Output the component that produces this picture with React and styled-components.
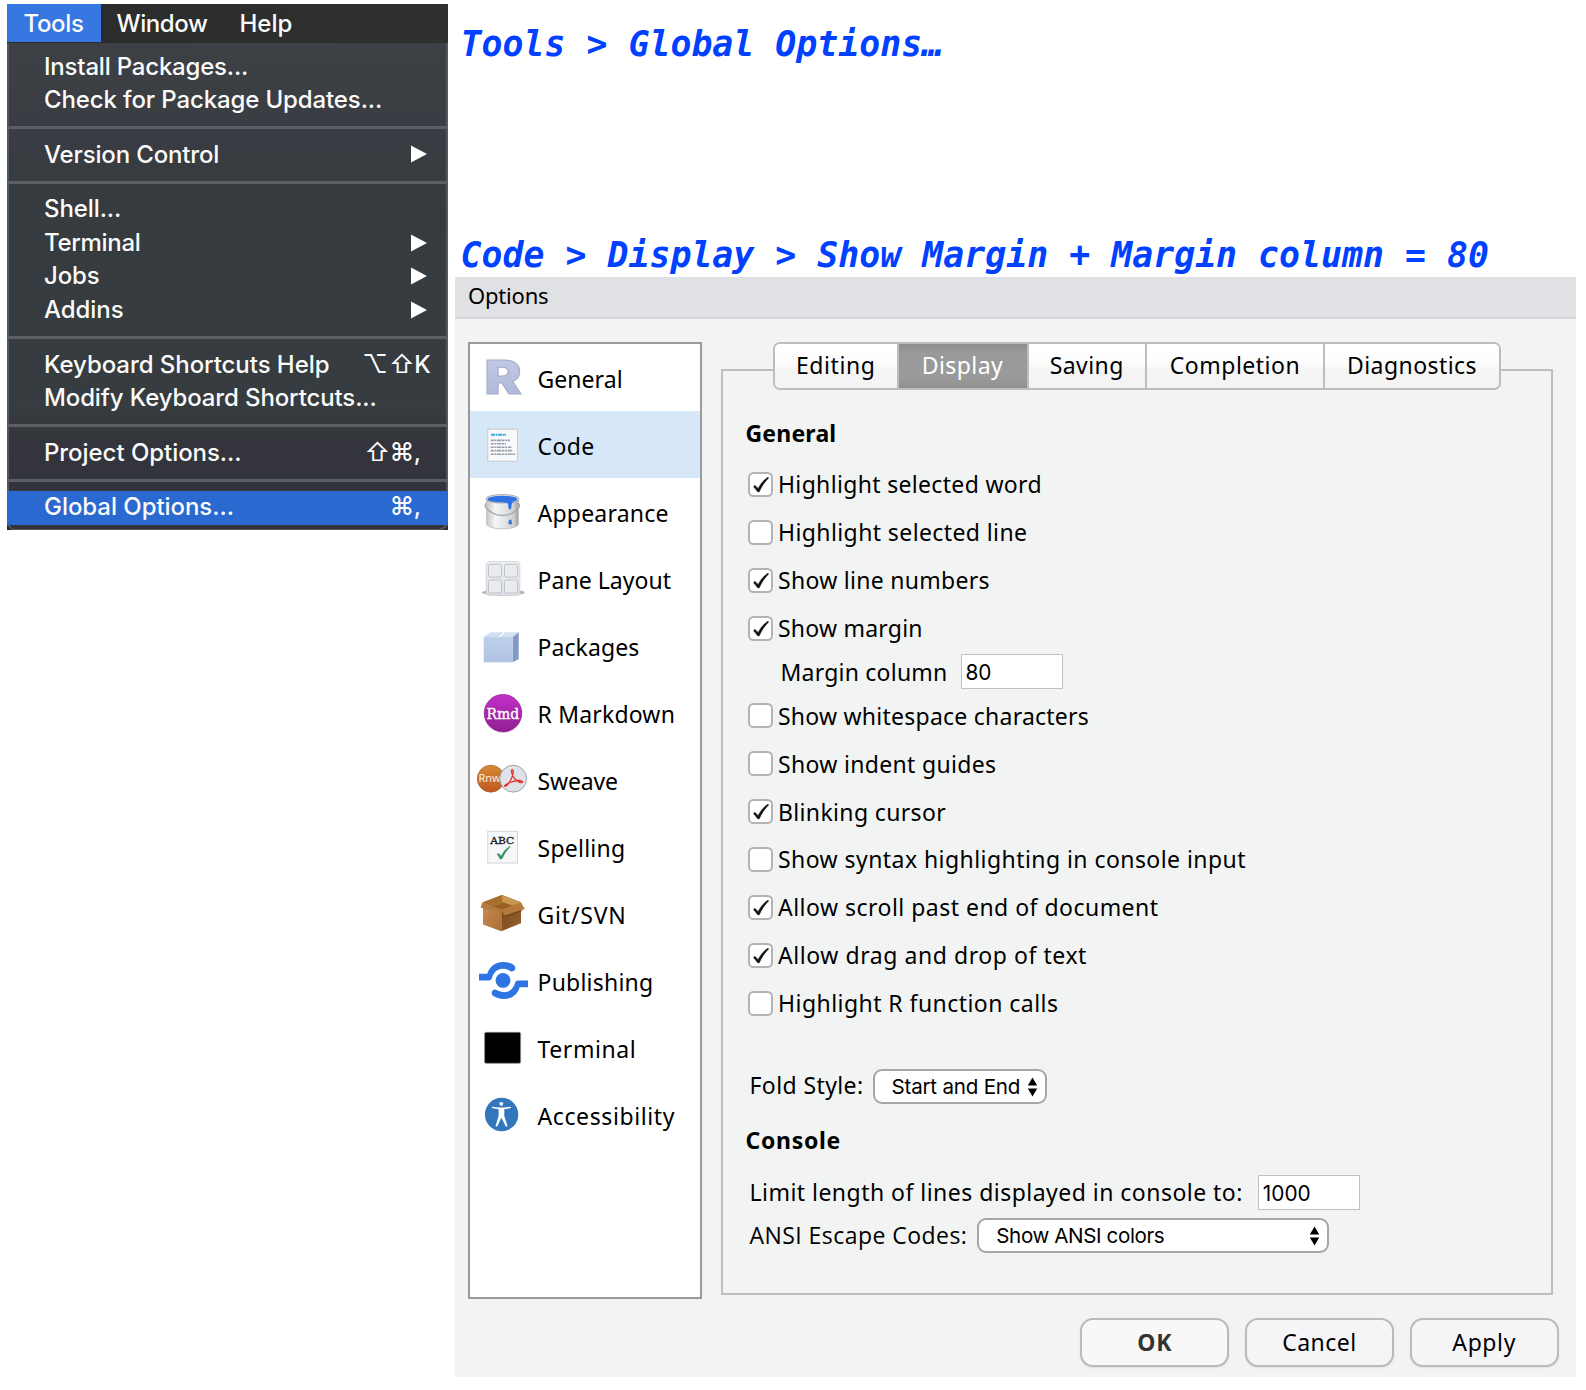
import React from "react";
import styled, { createGlobalStyle, css } from "styled-components";

const menuFont = `Inter, "DejaVu Sans", sans-serif`;
const dialogFont = `"Noto Sans", "Open Sans", sans-serif`;

const GlobalStyle = createGlobalStyle`
  *, *::before, *::after { box-sizing: border-box; }
  body { margin: 0; background: #fff; color: #000; }
`;

const Page = styled.main`
  width: 1586px;
  height: 1390px;
  display: grid;
  grid-template-columns: 441px 1121px;
  column-gap: 7px;
  padding: 4px 10px 0 7px;
  overflow: hidden;
  align-items: start;
`;

const Text = styled.span`
  white-space: pre;
  letter-spacing: ${(p) => p.$track || 0}px;
`;

/* ---------- Menu ---------- */

const MenuShot = styled.section`
  height: 526px;
  display: flex;
  flex-direction: column;
  background: #2b2b30;
  font: 500 24px/33.6px ${menuFont};
  color: #fbfbfb;
`;

const MenuBar = styled.nav`
  height: 39px;
  display: flex;
  flex: none;
  background: linear-gradient(90deg, #2a2b2b, #2f302f);
`;

const BarItem = styled.div`
  height: ${(p) => (p.$active ? 38 : 39)}px;
  line-height: 39px;
  padding: 0 0 0 ${(p) => p.$left}px;
  width: ${(p) => p.$width}px;
  background: ${(p) => (p.$active ? "#3777e1" : "transparent")};
`;

const MenuList = styled.div`
  flex: 1;
  padding-top: 7px;
  border-radius: 0 0 8px 8px;
  background: linear-gradient(180deg, #3d4044 0%, #393d43 20%, #353b3e 35%, #363c3f 75%, #34353c 82%, #33343b 100%);
  box-shadow: inset 2px 0 0 #54585c, inset -2px -1px 0 #54585c;
`;

const MenuRow = styled.div`
  height: 33.6px;
  display: flex;
  align-items: center;
  padding: 0 21.5px 0 37px;
  background: ${(p) => (p.$active ? "#2a69d0" : "transparent")};

  > span { padding-bottom: 1px; }
`;

const Separator = styled.div`
  height: 3px;
  margin: 9px 0;
  background: #5b5f64;
`;

const MenuEnd = styled.span`
  margin-left: auto;
  display: flex;
  align-items: center;
  margin-right: ${(p) => p.$pull || 0}px;
`;

const Key = styled.span`
  width: ${(p) => p.$w}px;
  text-align: center;
  font-weight: ${(p) => (p.$bold ? 500 : 400)};
  font-size: ${(p) => (p.$symbol ? 25 : 24)}px;
`;

const Arrow = () => (
  <svg width="16" height="18" viewBox="0 0 16 18">
    <path d="M0 .5 16 9 0 17.5Z" fill="#fff" />
  </svg>
);

const keyWidth = { "⌥": 28, "⇧": 25, "⌘": 24, K: 17, ",": 8 };

const menuItems = [
  { label: "Install Packages...", track: -0.2 },
  { label: "Check for Package Updates...", track: -0.12 },
  null,
  { label: "Version Control", track: -0.15, sub: true },
  null,
  { label: "Shell...", track: -0.1 },
  { label: "Terminal", track: -0.3, sub: true },
  { label: "Jobs", track: -0.1, sub: true },
  { label: "Addins", track: -0.05, sub: true },
  null,
  { label: "Keyboard Shortcuts Help", track: -0.06, keys: "⌥⇧K", pull: -4.5 },
  { label: "Modify Keyboard Shortcuts...", track: -0.12 },
  null,
  { label: "Project Options...", track: -0.05, keys: "⇧⌘,", pull: 5 },
  null,
  { label: "Global Options...", track: -0.05, keys: "⌘,", pull: 5, active: true },
];

const ToolsMenu = () => (
  <MenuShot>
    <MenuBar>
      <BarItem $active $left={16.5} $width={94}>
        <Text $track={-0.35}>Tools</Text>
      </BarItem>
      <BarItem $left={15.5} $width={123}>
        <Text $track={-0.4}>Window</Text>
      </BarItem>
      <BarItem $left={15.5} $width={100}>
        <Text>Help</Text>
      </BarItem>
    </MenuBar>
    <MenuList>
      {menuItems.map((item, i) =>
        item ? (
          <MenuRow key={i} $active={item.active}>
            <Text $track={item.track}>{item.label}</Text>
            {item.sub && (
              <MenuEnd>
                <Arrow />
              </MenuEnd>
            )}
            {item.keys && (
              <MenuEnd $pull={item.pull}>
                {[...item.keys].map((k) => (
                  <Key key={k} $w={keyWidth[k]} $symbol={k > "z"} $bold={k < "z" || k === "⌘"}>
                    {k}
                  </Key>
                ))}
              </MenuEnd>
            )}
          </MenuRow>
        ) : (
          <Separator key={i} />
        )
      )}
    </MenuList>
  </MenuShot>
);

/* ---------- Right column ---------- */

const Guide = styled.section`
  display: flex;
  flex-direction: column;
`;

const Step = styled.h2`
  margin: ${(p) => p.$top}px 0 0 5.5px;
  height: 43px;
  font: italic 700 34.8px/43px "DejaVu Sans Mono", monospace;
  letter-spacing: 0.04px;
  color: #0040ff;
  white-space: pre;
`;

const Dialog = styled.section`
  height: 1100px;
  display: flex;
  flex-direction: column;
  background: #f2f4f3;
  font: 400 23px/30px ${dialogFont};
`;

const TitleBar = styled.header`
  height: 42px;
  flex: none;
  padding-left: 13px;
  background: #e0e1e5;
  border-bottom: 2px solid #d6d7db;
  font-size: 22px;
  line-height: 37px;
`;

const DialogBody = styled.div`
  display: flex;
  gap: 19px;
  padding: 23px 23px 0 13px;
`;

const Sidebar = styled.nav`
  width: 234px;
  height: 957px;
  flex: none;
  border: 2px solid #999b9b;
  background: #fff;
`;

const SideItem = styled.div`
  height: 67px;
  display: flex;
  align-items: center;
  background: ${(p) => (p.$active ? "#d6e8f7" : "transparent")};

  svg { flex: none; }
  span { margin-left: -0.5px; padding-top: 2.5px; }
`;

const Frame = styled.div`
  width: 832px;
  height: 926px;
  margin-top: 27px;
  border: 2px solid #bcbebd;
  display: flex;
  flex-direction: column;
`;

const TabBar = styled.div`
  width: 728px;
  height: 48px;
  flex: none;
  margin: -29px auto 0 50px;
  display: flex;
  border: 2px solid #bcbebd;
  border-radius: 7px;
  overflow: hidden;
`;

const Tab = styled.div`
  width: ${(p) => p.$width}px;
  flex: none;
  display: flex;
  justify-content: center;
  line-height: 43px;
  background: linear-gradient(180deg, #fff 0%, #fdfdfd 40%, #f5f5f6 60%, #f3f3f4 100%);
  border-right: ${(p) => (p.$last ? 0 : 2)}px solid #bcbebd;
  ${(p) =>
    p.$active &&
    css`
      color: #fff;
      background: linear-gradient(180deg, #8d8d8d 0%, #9a9a9a 22%, #9a9a9a 80%, #8f8f8f 100%);
    `}
`;

const Settings = styled.div`
  padding: 28px 0 0 22.5px;
  display: flex;
  flex-direction: column;
`;

const Heading = styled.h3`
  margin: ${(p) => p.$top || 0}px 0 0;
  font: 700 23px/30px ${dialogFont};
`;

const Options = styled.div`
  padding: 12.5px 0 0 2.5px;
`;

const Option = styled.div`
  height: 47.87px;
  display: flex;
  align-items: center;
  gap: 5px;
`;

const Box = styled.span`
  width: 25px;
  height: 25px;
  border: 2px solid #b3b3b3;
  border-radius: 5.5px;
  background: #fff;
  display: grid;
  place-items: center;
  flex: none;
`;

const Check = () => (
  <svg width="19" height="19" viewBox="0 0 19 19">
    <path d="M2.6 11.6 4 10.4 7.2 13.7C9.7 8.8 12.4 5.3 17 2.3L17.6 2.9C13.6 6.8 10.6 11 8.2 16.8L7 16.9Z" fill="#111" stroke="#111" strokeWidth=".7" />
  </svg>
);

const Row = styled.div`
  height: ${(p) => p.$height}px;
  margin-top: ${(p) => p.$top || 0}px;
  padding-left: ${(p) => p.$indent}px;
  display: flex;
  align-items: center;

  > span { line-height: 30px; padding-bottom: ${(p) => p.$lift || 0}px; }
`;

const Field = styled.input`
  width: 102px;
  height: 35px;
  margin: 0 0 0 ${(p) => p.$left}px;
  padding: 2px 0 0 4px;
  border: 1.5px solid #c0c0c0;
  border-radius: 0;
  background: #fff;
  font: 400 20.8px/30px ${menuFont};
  color: #000;
  outline: none;
`;

const Select = styled.div`
  width: ${(p) => p.$width}px;
  height: 35px;
  margin-left: ${(p) => p.$left}px;
  padding: 1px 7px 0 17px;
  border: 2px solid #a6a6a6;
  border-radius: 9px;
  background: #fff;
  display: flex;
  align-items: center;
  justify-content: space-between;
  font: 400 20.6px/32px ${menuFont};
`;

const OpenSansText = styled(Text)`
  font-family: "Open Sans", sans-serif;
`;

const UpDown = () => (
  <svg width="11" height="20" viewBox="0 0 11 20">
    <path d="M5.5.6 10.2 8.6H.8Z M5.5 19.4 10.2 11.4H.8Z" fill="#000" />
  </svg>
);

const Actions = styled.footer`
  display: flex;
  justify-content: flex-end;
  gap: 16px;
  padding: 18.5px 17.5px 0 0;
`;

const Button = styled.button`
  width: 148.7px;
  height: 49.5px;
  padding: 0 0 1px;
  border: 2px solid #b9babb;
  border-radius: 13px;
  background: ${(p) => (p.$primary ? "#f8f8f8" : "#f5f5f8")};
  box-shadow: 0 1px 2px rgba(0, 0, 0, 0.08);
  font: ${(p) => (p.$primary ? 700 : 400)} 23px/30px ${dialogFont};
  color: ${(p) => (p.$primary ? "#333" : "#000")};
`;

/* ---------- Sidebar icons ---------- */

const Icon = ({ children }) => (
  <svg width="68" height="67" viewBox="0 0 68 67" fill="none">
    {children}
  </svg>
);

const RIcon = () => (
  <Icon>
    <linearGradient id="r" x1="0" y1="0" x2="0" y2="1">
      <stop offset="0" stopColor="#c6cde6" />
      <stop offset="1" stopColor="#a9b5d9" />
    </linearGradient>
    <text x="14.4" y="50.4" fontFamily="Inter" fontWeight="900" fontSize="46.5" textLength="37.2" lengthAdjust="spacingAndGlyphs" fill="url(#r)" stroke="#a8adc8" strokeWidth="1">R</text>
  </Icon>
);

const CodeIcon = () => (
  <Icon>
    <rect x="17.8" y="18.2" width="29.6" height="32" fill="#f8f9fc" stroke="#c6c8cd" />
    <g strokeWidth="2">
      <path d="M21 23.7H36" stroke="#38aad8" strokeDasharray="4 .6 2 .5" />
      <g stroke="#9b9ea8" strokeDasharray="3 .7 2 .6 4 .5" strokeWidth="1.6">
        <path d="M20.7 29.4H40M20.7 32.8H36M20.7 36.2H41.5M20.7 39.6H42.5M20.7 43.2H45" />
      </g>
    </g>
  </Icon>
);

const BucketIcon = () => (
  <Icon>
    <linearGradient id="pail" x1="0" x2="1">
      <stop offset="0" stopColor="#c5c8cb" />
      <stop offset=".28" stopColor="#f5f6f7" />
      <stop offset=".6" stopColor="#dfe1e3" />
      <stop offset=".85" stopColor="#cdd0d2" />
      <stop offset="1" stopColor="#9da1a4" />
    </linearGradient>
    <path d="M16.6 21V46.4C18 49 24.5 50.9 32.5 50.9S47 49 48.4 46.4V21Z" fill="url(#pail)" stroke="#b0b3b5" strokeWidth=".7" />
    <ellipse cx="32.4" cy="20.8" rx="16.6" ry="4.3" fill="#e4e6e8" stroke="#aaaeb1" />
    <ellipse cx="32.4" cy="21.2" rx="14.9" ry="3.4" fill="#2f72e4" />
    <path d="M30 23.5C35 24.6 37 24.5 38 25.3L38.7 30.5C39.2 32 41 31.6 41.2 30L41.8 25.5 44 23.6Z" fill="#2d6fe0" />
    <path d="M38.6 43.6C39 41.2 41 40.8 41.6 42.4L42 46.2H38.6Z" fill="#2d77e8" />
    <path d="M16 25.5C14 27.5 15.5 30 18.5 32.3C26.5 39 38.5 39.2 46 32.5C49 30 50.7 27.5 48.7 25.4" stroke="#a3a6a8" strokeWidth="1.3" />
  </Icon>
);

const PaneIcon = () => (
  <Icon>
    <linearGradient id="pane" x1="0" y1="0" x2="0" y2="1">
      <stop offset="0" stopColor="#eef0f3" />
      <stop offset="1" stopColor="#dcdfe3" />
    </linearGradient>
    <ellipse cx="33.4" cy="47.6" rx="21.3" ry="3.2" fill="#b3b5b8" />
    <rect x="16.3" y="16.6" width="33.5" height="33.8" rx="3" fill="url(#pane)" stroke="#cdd0d5" strokeWidth=".8" />
    <g fill="#e9ebee" stroke="#bfc3c9">
      <rect x="18.5" y="19.3" width="13" height="12.8" rx="1.5" />
      <rect x="34.5" y="19.3" width="13" height="12.8" rx="1.5" />
      <rect x="18.5" y="35" width="13" height="13" rx="1.5" />
      <rect x="34.5" y="35" width="13" height="13" rx="1.5" />
    </g>
  </Icon>
);

const PackagesIcon = () => (
  <Icon>
    <linearGradient id="pkg" x1="0" y1="0" x2="0" y2="1">
      <stop offset="0" stopColor="#bdd0ea" />
      <stop offset="1" stopColor="#afc2e2" />
    </linearGradient>
    <path d="M13.7 25 20.5 20.2H48.7L42.7 25Z" fill="#d3e1f2" />
    <path d="M42.7 25 48.7 20.2V47L42.7 50.3Z" fill="#8199c8" />
    <path d="M13.7 25H42.7V50.3H13.7Z" fill="url(#pkg)" />
    <path d="M28.5 24.6 33.8 20.3" stroke="#fff" strokeWidth="1.6" />
    <path d="M26.8 24.6 32 20.3" stroke="#a9bddd" strokeWidth=".8" />
  </Icon>
);

const RmdIcon = () => (
  <Icon>
    <linearGradient id="rmd" x1="0" y1="0" x2="0" y2="1">
      <stop offset="0" stopColor="#c12fc9" />
      <stop offset="1" stopColor="#90208f" />
    </linearGradient>
    <circle cx="33" cy="34.2" r="18.8" fill="url(#rmd)" stroke="#8a2a8c" strokeWidth=".7" />
    <text x="16.6" y="39.7" fontFamily="DejaVu Serif" fontSize="15.5" textLength="32.6" lengthAdjust="spacingAndGlyphs" fill="#fff" stroke="#fff" strokeWidth=".4">Rmd</text>
  </Icon>
);

const SweaveIcon = () => (
  <Icon>
    <linearGradient id="rnw" x1="0" y1="0" x2="0" y2="1">
      <stop offset="0" stopColor="#d58a34" />
      <stop offset="1" stopColor="#c0571f" />
    </linearGradient>
    <circle cx="20.8" cy="32.7" r="13.5" fill="url(#rnw)" stroke="#a4622c" strokeWidth=".7" />
    <text x="8.6" y="36" fontFamily="Noto Sans" fontSize="10.5" textLength="22" lengthAdjust="spacingAndGlyphs" fill="#fbeee0">Rnw</text>
    <circle cx="43.2" cy="32.7" r="13.4" fill="#e1e2e7" stroke="#8f97a8" strokeWidth=".9" />
    <path d="M42.2 23.6C40.8 23.8 41.6 27.6 43 30.2 45 33.8 49.5 37 52 36.6 53.8 36 51.5 34.4 48.5 34.5 44 34.6 36.5 37.4 34.8 39.5 34.2 41.2 36.5 40.5 38.6 37.4 41 34 43 29 43.2 26 43.3 24.5 42.9 23.6 42.2 23.6Z" stroke="#e8332f" strokeWidth="1.3" strokeLinejoin="round" />
  </Icon>
);

const SpellingIcon = () => (
  <Icon>
    <rect x="17.7" y="18.3" width="29.8" height="31.7" fill="#f5f7fa" stroke="#d3d6da" />
    <text x="20.3" y="30.6" fontFamily="DejaVu Serif" fontSize="9.4" textLength="24" lengthAdjust="spacingAndGlyphs" fill="#1a1a1a" stroke="#1a1a1a" strokeWidth=".3">ABC</text>
    <path d="M27 41.2 29 40.4 31.1 43.2C33 39.2 35.5 36 39.8 33.2L39.6 34.6C36.5 37.8 34.2 41.2 32.2 45.6L30 46.2C29.2 44.2 28.3 42.5 27 41.2Z" fill="#32905a" stroke="#32905a" strokeWidth=".4" />
  </Icon>
);

const GitIcon = () => (
  <Icon>
    <linearGradient id="boxL" x1="0" y1="0" x2="1" y2="1">
      <stop offset="0" stopColor="#c98c55" />
      <stop offset="1" stopColor="#ab6c36" />
    </linearGradient>
    <linearGradient id="boxR" x1="0" y1="0" x2="1" y2="1">
      <stop offset="0" stopColor="#7c4a1c" />
      <stop offset="1" stopColor="#93602d" />
    </linearGradient>
    <path d="M12.3 22.5 32 15 51 22.3 32 31Z" fill="#9a6127" />
    <path d="M32 15 51 22.3 44 26 32 22Z" fill="#c9964f" />
    <path d="M32 15V24L22 26.5 12.3 22.5Z" fill="#a86f2e" />
    <path d="M13 24 31.3 30V51.3L13 44.6Z" fill="url(#boxL)" />
    <path d="M31.3 30 51 23V43.3L31.3 51.3Z" fill="url(#boxR)" />
    <path d="M12.3 22.5 31.6 29.5 30.5 32.6 10.7 27.8Z" fill="#b57a42" />
    <path d="M31.3 29.8 50.8 22.3 54.7 28.8 35 35.4Z" fill="#b77a3d" />
    <path d="M35 35.6 54.5 29 51 31.8 36 37Z" fill="#5d3714" opacity=".5" />
  </Icon>
);

const PublishingIcon = () => (
  <Icon>
    <circle cx="33" cy="33.4" r="7.4" fill="#2e75e3" />
    {[0, 180].map((turn) => (
      <g key={turn} transform={`rotate(${turn} 33.5 33.5)`}>
        <path d="M9 26.8H17.3C19.5 19 26 15 33 15 37.5 15 41.5 16.2 44 18.2 47.4 21.3 43.8 26 40.2 23.9 31 19 24 23.5 22 31 21.4 32.6 20.6 33.4 19 33.4H9Z" fill="#2e75e3" />
      </g>
    ))}
  </Icon>
);

const TerminalIcon = () => (
  <Icon>
    <rect x="14.6" y="18.3" width="36" height="31" rx="1.5" fill="#000" stroke="#8a8a8a" strokeWidth=".7" />
  </Icon>
);

const AccessibilityIcon = () => (
  <Icon>
    <circle cx="31.6" cy="33.5" r="16.7" fill="#3277bb" />
    <circle cx="31.3" cy="22.8" r="1.9" fill="#fff" />
    <path d="M21.8 25.7 28.5 26.4H34.2L40.8 25.7 41 27 34.3 28.2V35L37.6 45.2 35.8 45.6 31.4 36.8 27.2 45.6 25.5 45.2 28.6 35V28.2L21.9 27Z" fill="#fff" />
  </Icon>
);

const sections = [
  ["General", RIcon, 0.05],
  ["Code", CodeIcon, 0.4],
  ["Appearance", BucketIcon, 0.22],
  ["Pane Layout", PaneIcon, 0.04],
  ["Packages", PackagesIcon, 0.08],
  ["R Markdown", RmdIcon, 0.18],
  ["Sweave", SweaveIcon, -0.15],
  ["Spelling", SpellingIcon, 0.25],
  ["Git/SVN", GitIcon, 0.8],
  ["Publishing", PublishingIcon, 0.22],
  ["Terminal", TerminalIcon, 0.58],
  ["Accessibility", AccessibilityIcon, 0.6],
];

const tabs = [
  ["Editing", 123.5, 0.6],
  ["Display", 130, 0.45],
  ["Saving", 118.5, 0.4],
  ["Completion", 178, 0.5],
  ["Diagnostics", 174, 0.45],
];

const topOptions = [
  ["Highlight selected word", true, 0.33],
  ["Highlight selected line", false, 0.4],
  ["Show line numbers", true, 0.28],
  ["Show margin", true, 0.22],
];

const moreOptions = [
  ["Show whitespace characters", false, 0.24],
  ["Show indent guides", false, 0.32],
  ["Blinking cursor", true, 0.35],
  ["Show syntax highlighting in console input", false, 0.44],
  ["Allow scroll past end of document", true, 0.48],
  ["Allow drag and drop of text", true, 0.56],
  ["Highlight R function calls", false, 0.45],
];

const CheckList = ({ items }) =>
  items.map(([label, on, track]) => (
    <Option key={label}>
      <Box>{on && <Check />}</Box>
      <Text $track={track}>{label}</Text>
    </Option>
  ));

export default function App() {
  return (
    <Page>
      <GlobalStyle />
      <ToolsMenu />
      <Guide>
        <Step $top={19}>Tools &gt; Global Options…</Step>
        <Step $top={168}>Code &gt; Display &gt; Show Margin + Margin column = 80</Step>
        <Dialog>
          <TitleBar>
            <Text $track={-0.2}>Options</Text>
          </TitleBar>
          <DialogBody>
            <Sidebar>
              {sections.map(([label, Glyph, track], i) => (
                <SideItem key={label} $active={i === 1}>
                  <Glyph />
                  <Text $track={track}>{label}</Text>
                </SideItem>
              ))}
            </Sidebar>
            <Frame>
              <TabBar>
                {tabs.map(([label, width, track], i) => (
                  <Tab key={label} $width={width} $active={i === 1} $last={i === 4}>
                    <Text $track={track}>{label}</Text>
                  </Tab>
                ))}
              </TabBar>
              <Settings>
                <Heading>
                  <Text $track={0.2}>General</Text>
                </Heading>
                <Options>
                  <CheckList items={topOptions} />
                  <Row $height={40} $indent={32.5} $lift={0}>
                    <Text $track={0.22}>Margin column</Text>
                    <Field $left={13} defaultValue="80" />
                  </Row>
                  <CheckList items={moreOptions} />
                </Options>
                <Row $height={35} $top={42} $indent={4} $lift={2}>
                  <Text $track={0.4}>Fold Style:</Text>
                  <Select $left={9} $width={174}>
                    <Text $track={-0.22}>Start and End</Text>
                    <UpDown />
                  </Select>
                </Row>
                <Heading $top={21}>
                  <Text $track={0.7}>Console</Text>
                </Heading>
                <Row $height={35} $top={20} $indent={4}>
                  <Text $track={0.47}>Limit length of lines displayed in console to:</Text>
                  <Field $left={15} defaultValue="1000" />
                </Row>
                <Row $height={35} $top={8} $indent={4} $lift={1}>
                  <OpenSansText $track={0.45}>ANSI Escape Codes:</OpenSansText>
                  <Select $left={10} $width={352}>
                    <Text $track={-0.4}>Show ANSI colors</Text>
                    <UpDown />
                  </Select>
                </Row>
              </Settings>
            </Frame>
          </DialogBody>
          <Actions>
            <Button $primary>
              <Text $track={0.8}>OK</Text>
            </Button>
            <Button>
              <Text $track={0.5}>Cancel</Text>
            </Button>
            <Button>
              <Text $track={0.6}>Apply</Text>
            </Button>
          </Actions>
        </Dialog>
      </Guide>
    </Page>
  );
}
